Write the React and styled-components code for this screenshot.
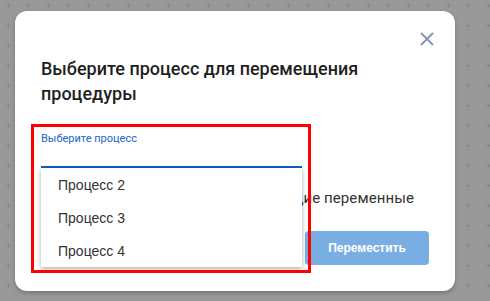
import React, { useState } from "react";
import styled, { createGlobalStyle } from "styled-components";

const GlobalStyle = createGlobalStyle`
    html, body {
        margin: 0;
        padding: 0;
        background: #999999;
    }
    * {
        box-sizing: border-box;
    }
`

const Page = styled.div`
    position: relative;
    width: 490px;
    height: 301px;
    overflow: hidden;
    padding: 11px 0 0 15px;
    font-family: Roboto, "Liberation Sans", sans-serif;
`

const Backdrop = styled.svg`
    position: absolute;
    inset: 0;
    width: 100%;
    height: 100%;
`

const Modal = styled.div`
    position: relative;
    width: 440px;
    height: 280px;
    padding: 45px 26px 26px 26px;
    display: flex;
    flex-direction: column;
    background: #fff;
    border-radius: 12px;
    box-shadow: 0 2px 4px rgba(0, 0, 0, 0.25);
`

const CloseButton = styled.button`
    position: absolute;
    top: 21px;
    right: 21px;
    width: 14px;
    height: 14px;
    padding: 0;
    border: none;
    background: none;
    cursor: pointer;
    display: flex;
`

const Title = styled.h2`
    margin: 0;
    font-size: 18px;
    line-height: 25px;
    font-weight: 500;
    color: #1f1f1f;
`

const Field = styled.div`
    position: relative;
    width: 261px;
    margin-top: 26px;
    display: flex;
    flex-direction: column;
`

const FieldLabel = styled.label`
    font-size: 11px;
    line-height: 13px;
    color: #1a66c9;
`

const FieldInput = styled.div`
    height: 23px;
    border-bottom: 2px solid #1160c7;
`

const Menu = styled.ul`
    position: absolute;
    top: 100%;
    left: 0;
    right: 0;
    margin: 0;
    padding: 0;
    list-style: none;
    background: #fff;
    z-index: 2;
    box-shadow: 0 2px 4px rgba(0, 0, 0, 0.22), 0 1px 6px rgba(0, 0, 0, 0.12);
`

const MenuItem = styled.li`
    height: 33px;
    display: flex;
    align-items: center;
    padding-left: 17px;
    font-family: "Liberation Sans", Arial, sans-serif;
    font-size: 14px;
    color: ${({ active }) => (active ? "#1160c7" : "#333")};
    cursor: pointer;
`

const Highlight = styled.div`
    position: absolute;
    top: -8px;
    left: -10px;
    width: 280px;
    height: 149px;
    border: 3px solid #ff0000;
    pointer-events: none;
    z-index: 3;
`

const OptionRow = styled.label`
    margin-top: 20px;
    padding-right: 15px;
    display: flex;
    justify-content: flex-end;
    align-items: center;
    gap: 10px;
    height: 20px;
    white-space: nowrap;
    font-size: 15px;
    letter-spacing: 0.1px;
    color: #333;
`

const Checkbox = styled.span`
    flex-shrink: 0;
    width: 16px;
    height: 16px;
    border: 2px solid #8a8a8a;
    border-radius: 2px;
`

const Actions = styled.div`
    margin-top: 23px;
    display: flex;
    justify-content: flex-end;
    gap: 12px;
`

const Button = styled.button`
    width: 124px;
    height: 34px;
    border: none;
    border-radius: 4px;
    font-family: "Liberation Sans", Arial, sans-serif;
    font-size: 12px;
    font-weight: 700;
    color: ${({ primary }) => (primary ? "#fff" : "#1160c7")};
    background: ${({ primary }) => (primary ? "#79aee4" : "transparent")};
    cursor: default;
`

const processes = ["Процесс 2", "Процесс 3", "Процесс 4"];

const App = () => {
    const [selected, setSelected] = useState(null);

    return (
        <>
            <GlobalStyle />
            <Page>
                <Backdrop>
                    <defs>
                        <pattern id="plus" x="0" y="0" width="20" height="20" patternUnits="userSpaceOnUse">
                            <rect x="6" y="5" width="5" height="1" fill="#888" />
                            <rect x="8" y="3" width="1" height="5" fill="#888" />
                        </pattern>
                    </defs>
                    <rect width="100%" height="100%" fill="url(#plus)" />
                </Backdrop>
                <Modal>
                    <CloseButton aria-label="Закрыть">
                        <svg width="14" height="14" viewBox="0 0 14 14">
                            <path d="M1 1 13 13M13 1 1 13" stroke="#7f95b3" strokeWidth="1.8" fill="none" />
                        </svg>
                    </CloseButton>
                    <Title>Выберите процесс для перемещения процедуры</Title>
                    <Field>
                        <FieldLabel>Выберите процесс</FieldLabel>
                        <FieldInput />
                        <Menu>
                            {processes.map((p, i) => (
                                <MenuItem key={p} active={selected === i} onClick={() => setSelected(i)}>
                                    {p}
                                </MenuItem>
                            ))}
                        </Menu>
                        <Highlight />
                    </Field>
                    <OptionRow>
                        <Checkbox />
                        Перенести текущие переменные
                    </OptionRow>
                    <Actions>
                        <Button>Отмена</Button>
                        <Button primary>Переместить</Button>
                    </Actions>
                </Modal>
            </Page>
        </>
    )
}

export default App;
